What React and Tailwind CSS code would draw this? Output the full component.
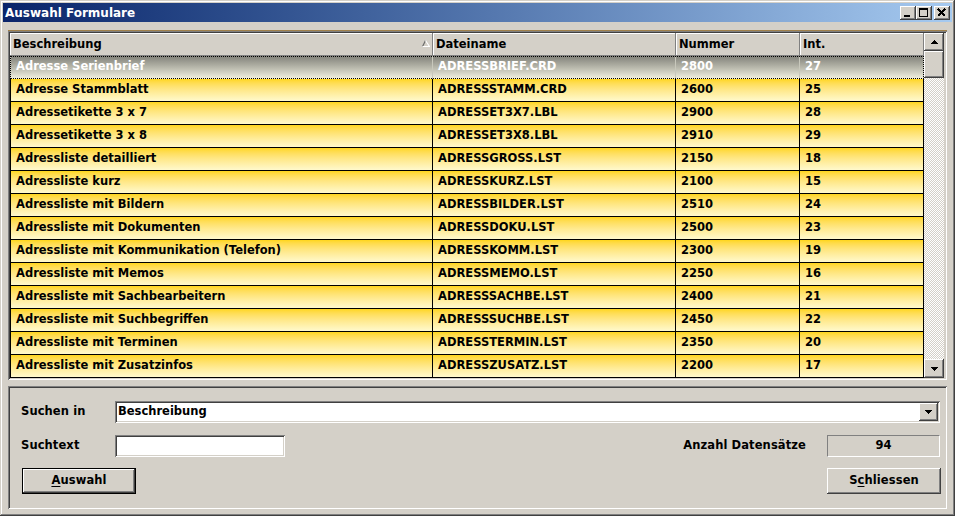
import React from 'react';

const ROWS = [
  ['Adresse Serienbrief', 'ADRESSBRIEF.CRD', '2800', '27'],
  ['Adresse Stammblatt', 'ADRESSSTAMM.CRD', '2600', '25'],
  ['Adressetikette 3 x 7', 'ADRESSET3X7.LBL', '2900', '28'],
  ['Adressetikette 3 x 8', 'ADRESSET3X8.LBL', '2910', '29'],
  ['Adressliste detailliert', 'ADRESSGROSS.LST', '2150', '18'],
  ['Adressliste kurz', 'ADRESSKURZ.LST', '2100', '15'],
  ['Adressliste mit Bildern', 'ADRESSBILDER.LST', '2510', '24'],
  ['Adressliste mit Dokumenten', 'ADRESSDOKU.LST', '2500', '23'],
  ['Adressliste mit Kommunikation (Telefon)', 'ADRESSKOMM.LST', '2300', '19'],
  ['Adressliste mit Memos', 'ADRESSMEMO.LST', '2250', '16'],
  ['Adressliste mit Sachbearbeitern', 'ADRESSSACHBE.LST', '2400', '21'],
  ['Adressliste mit Suchbegriffen', 'ADRESSSUCHBE.LST', '2450', '22'],
  ['Adressliste mit Terminen', 'ADRESSTERMIN.LST', '2350', '20'],
  ['Adressliste mit Zusatzinfos', 'ADRESSZUSATZ.LST', '2200', '17'],
];

const COLS = ['w-[423px]', 'w-[243px]', 'w-[124px]', 'w-[124px]'];

// classic win2k bevels
const raised =
  'shadow-[inset_-1px_-1px_#404040,inset_1px_1px_#ffffff,inset_-2px_-2px_#808080,inset_2px_2px_#d4d0c8]';
const sunken =
  'shadow-[inset_1px_1px_#808080,inset_-1px_-1px_#ffffff,inset_2px_2px_#404040,inset_-2px_-2px_#d4d0c8]';

function Arrow({ up }) {
  return (
    <svg width="7" height="4" viewBox="0 0 7 4" shapeRendering="crispEdges">
      {up ? (
        <polygon points="3.5,0 7,4 0,4" fill="#000" />
      ) : (
        <polygon points="0,0 7,0 3.5,4" fill="#000" />
      )}
    </svg>
  );
}

function CaptionButton({ kind }) {
  return (
    <div className={`w-[16px] h-[14px] bg-[#d4d0c8] flex items-center justify-center ${raised}`}>
      <svg width="16" height="14" viewBox="0 0 16 14" shapeRendering="crispEdges">
        {kind === 'min' && <rect x="4" y="9" width="6" height="2" fill="#000" />}
        {kind === 'max' && (
          <g fill="none" stroke="#000">
            <rect x="3.5" y="2.5" width="8" height="8" />
            <line x1="3" y1="3.5" x2="12" y2="3.5" />
          </g>
        )}
        {kind === 'close' && (
          <g stroke="#000" strokeWidth="1.6">
            <line x1="4" y1="3" x2="11" y2="10" />
            <line x1="11" y1="3" x2="4" y2="10" />
          </g>
        )}
      </svg>
    </div>
  );
}

function SortMark() {
  return (
    <svg width="8" height="7" viewBox="0 0 8 7">
      <polyline points="0.5,6.5 3.5,0.5" fill="none" stroke="#6a6a6a" strokeWidth="1.2" />
      <polyline points="3.5,0.5 7.5,6.5 0.5,6.5" fill="none" stroke="#ffffff" strokeWidth="1.2" />
    </svg>
  );
}

export default function App() {
  const font = { fontFamily: '"DejaVu Sans", Verdana, sans-serif' };
  return (
    <div
      className={`w-[955px] h-[516px] bg-[#d4d0c8] p-[3px] flex flex-col text-black shadow-[inset_-1px_-1px_#404040,inset_1px_1px_#d4d0c8,inset_-2px_-2px_#808080,inset_2px_2px_#ffffff]`}
      style={font}
    >
      {/* title bar */}
      <div className="h-[19px] flex items-center bg-linear-to-r from-[#0a246a] to-[#a6caf0] pl-[2px] pr-[2px]">
        <span className="text-white font-bold text-[12px] leading-none">Auswahl Formulare</span>
        <div className="ml-auto flex items-center">
          <CaptionButton kind="min" />
          <CaptionButton kind="max" />
          <div className="w-[2px]" />
          <CaptionButton kind="close" />
        </div>
      </div>

      <div className="flex-1 flex flex-col px-[5px] pt-[8px]">
        {/* grid */}
        <div className={`p-[2px] bg-[#d4d0c8] ${sunken} border-t border-t-[#a0804a] flex`}>
          <div className="flex flex-col text-[11.5px] font-bold">
            <div className="flex h-[23px] bg-[#d4d0c8]">
              {['Beschreibung', 'Dateiname', 'Nummer', 'Int.'].map((h, i) => (
                <div
                  key={h}
                  className={`${COLS[i]} h-full flex items-center pl-[3px] shadow-[inset_-1px_-1px_#808080,inset_1px_1px_#ffffff] relative`}
                >
                  {h}
                  {i === 0 && (
                    <span className="absolute right-[3px] top-[7px] flex">
                      <SortMark />
                    </span>
                  )}
                </div>
              ))}
            </div>
            {ROWS.map((r, ri) => {
              const sel = ri === 0;
              return (
                <div
                  key={r[1]}
                  className={`flex h-[23px] ${
                    sel
                      ? 'bg-linear-to-b from-[#82827a] via-[#b8b8ac] to-[#f4f3e2] text-white outline-1 outline-dotted outline-black -outline-offset-1'
                      : 'bg-linear-to-b from-[#ffd616] to-[#fff9cc] border-b border-black'
                  }`}
                >
                  {r.map((c, ci) => (
                    <div
                      key={ci}
                      className={`${COLS[ci]} h-full flex items-center pl-[5px] pb-[1px] border-r ${
                        sel ? 'border-[#c8c8bc]' : 'border-black'
                      } ${ci === 0 ? 'border-l' : ''}`}
                    >
                      {c}
                    </div>
                  ))}
                </div>
              );
            })}
          </div>
          {/* scrollbar */}
          <div className="w-[20px] flex flex-col">
            <div className={`h-[18px] bg-[#d4d0c8] flex items-center justify-center ${raised}`}>
              <Arrow up />
            </div>
            <div className={`h-[27px] bg-[#d4d0c8] ${raised}`} />
            <div className="flex-1 bg-[repeating-conic-gradient(#d4d0c8_0_25%,#ffffff_0_50%)] bg-size-[2px_2px]" />
            <div className={`h-[19px] bg-[#d4d0c8] flex items-center justify-center ${raised}`}>
              <Arrow />
            </div>
          </div>
        </div>

        {/* search panel */}
        <div
          className={`mt-[6px] h-[123px] p-[2px] ${sunken} text-[11.5px] font-bold tracking-[0.1px]`}
        >
          <div className="flex flex-col pl-[11px] pr-[5px] pt-[13px]">
            <div className="flex items-center h-[22px]">
              <span className="w-[94px]">Suchen in</span>
              <div className={`flex-1 h-full bg-white p-[2px] flex items-center ${sunken}`}>
                <span className="pl-[1px] tracking-normal">Beschreibung</span>
                <div className={`ml-auto w-[19px] h-full bg-[#d4d0c8] flex items-center justify-center ${raised}`}>
                  <Arrow />
                </div>
              </div>
            </div>
            <div className="flex items-center h-[22px] mt-[12px]">
              <span className="w-[94px]">Suchtext</span>
              <div className={`w-[170px] h-full bg-white ${sunken}`} />
              <span className="ml-auto mr-[21px]">Anzahl Datensätze</span>
              <div className="w-[113px] h-full border border-[#808080] border-r-white border-b-white flex items-center justify-center">
                94
              </div>
            </div>
            <div className="flex items-center h-[26px] mt-[11px]">
              <button
                className={`ml-[1px] w-[114px] h-full border border-black bg-[#d4d0c8] ${raised} text-[11.5px] font-bold`}
              >
                <span className="underline underline-offset-2">A</span>uswahl
              </button>
              <button
                className={`ml-auto -mr-[1px] w-[114px] h-full bg-[#d4d0c8] ${raised} text-[11.5px] font-bold`}
              >
                S<span className="underline underline-offset-2">c</span>hliessen
              </button>
            </div>
          </div>
        </div>
      </div>
    </div>
  );
}
